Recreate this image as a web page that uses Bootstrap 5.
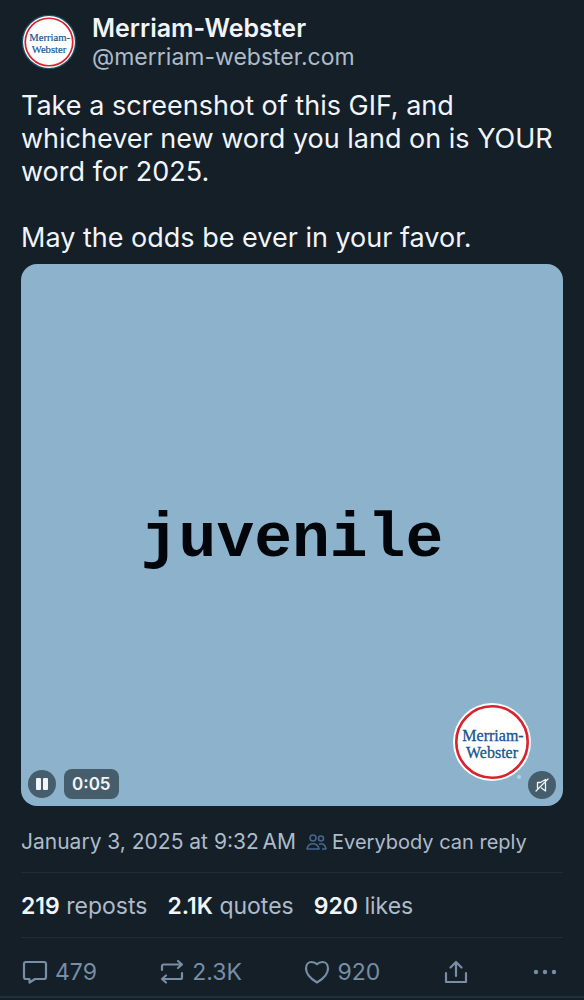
<!DOCTYPE html>
<html lang="en">
<head>
<meta charset="utf-8">
<meta name="viewport" content="width=device-width, initial-scale=1">
<title>Merriam-Webster post</title>
<link href="https://cdn.jsdelivr.net/npm/bootstrap@5.3.0/dist/css/bootstrap.min.css" rel="stylesheet">
<style>
body{background:#141f28;color:#f1f4f9;font-family:Inter,"Liberation Sans",sans-serif}
a{text-decoration:none;color:inherit}
.post{padding:13px 21px 0;border-bottom:2px solid #202f39}
.author{gap:15px}
.avatar{width:56px;height:56px}
.author-name{font-size:25px;line-height:30px;font-weight:600}
.author-handle{font-size:23px;line-height:28px;color:#aebbc9}
.post-text{font-size:27px;line-height:33px;padding:18px 0 10px}
.media{aspect-ratio:1;background:#8cb3cb;border-radius:16px;padding-top:10px}
.word{font:bold 63px/72px "Liberation Mono",monospace;color:#02060b}
.seal{width:80px;height:80px;right:31px;bottom:24px}
.chip,.chip:hover{background:#465e6b;color:#f1f4f9}
.round{width:28px;height:28px}
.controls{left:7px;bottom:7px}
.mute{right:7px;bottom:7px}
.time{font-size:17px;line-height:30px;font-weight:600;border-radius:8px;padding:0 8px}
.meta{font-size:21px;line-height:28px;color:#aebbc9;padding:22px 0 16px}
.audience{font-size:20px;line-height:28px;color:#aebbc9}
.stats{font-size:23px;line-height:28px;color:#aebbc9;gap:20px;padding:19px 0 17px}
.rule{border-top:1px solid #202d38}
.stats b{font-weight:600;color:#f1f4f9}
.actions{padding:20px 0 10px}
.act{font-size:23px;line-height:28px;color:#788ea5;gap:6px}
svg{display:block;flex:none}
</style>
</head>
<body>
<svg width="0" height="0" class="position-absolute" aria-hidden="true">
<symbol id="seal" viewBox="0 0 80 80" overflow="visible">
<circle cx="40" cy="40" r="39" fill="#fff"/>
<circle cx="40" cy="40" r="35.7" fill="#fff" stroke="#d8232f" stroke-width="2.6"/>
<g fill="#15548f" stroke="#15548f" stroke-width=".3" font-family="Liberation Serif,serif" font-size="16" text-anchor="middle"><text x="41" y="39">Merriam-</text><text x="40" y="56">Webster</text></g>
</symbol>
</svg>
<main class="post">
<header class="author d-flex align-items-center">
<a href="#" aria-label="Merriam-Webster profile"><svg class="avatar" viewBox="0 0 80 80"><circle cx="40" cy="40" r="39" fill="#1c5268"/><use href="#seal" x="2" y="2" width="76" height="76"/></svg></a>
<div class="d-flex flex-column"><a href="#" class="author-name">Merriam-Webster</a><a href="#" class="author-handle">@merriam-webster.com</a></div>
</header>
<p class="post-text mb-0">Take a screenshot of this GIF, and whichever new word you land on is YOUR word for 2025.<br><br>May the odds be ever in your favor.</p>
<section class="media position-relative d-flex align-items-center justify-content-center">
<span class="word">juvenile</span>
<svg class="seal position-absolute" role="img" aria-label="Merriam-Webster logo"><use href="#seal"/><circle cx="67" cy="75" r="2" fill="#b5d3e5"/></svg>
<div class="controls position-absolute d-flex align-items-center gap-2">
<button type="button" class="btn border-0 chip round rounded-circle p-0 d-flex align-items-center justify-content-center" aria-label="Pause"><svg width="14" height="14" fill="currentColor"><rect x="1" y="1" width="5" height="12" rx="1"/><rect x="8" y="1" width="5" height="12" rx="1"/></svg></button>
<span class="chip time">0:05</span>
</div>
<button type="button" class="mute position-absolute btn border-0 chip round rounded-circle p-0 d-flex align-items-center justify-content-center" aria-label="Unmute"><svg width="16" height="16" viewBox="0 0 16 16" fill="none" stroke="currentColor" stroke-width="1.3" stroke-linejoin="round" stroke-linecap="round"><path d="M2 14 14 2M3.500 11V5.500H6.500L11.500 2.500V4.500M11.500 6v8L7.500 11"/></svg></button>
</section>
<div class="meta d-flex align-items-center">
<time datetime="2025-01-03T09:32">January 3, 2025 at 9:32&#8239;AM</time>
<button type="button" class="audience btn border-0 p-0 d-flex align-items-center"><svg class="ms-2 me-1" width="24" height="20" viewBox="0 0 24 20" fill="none" stroke="#45678a" stroke-width="1.6" stroke-linejoin="round"><circle cx="9" cy="6" r="3"/><circle cx="17" cy="6.500" r="2.500"/><path d="M3 17c.7-3.600 3-5.200 6-5.200s5.300 1.600 6 5.200zM15 12.200c3.500-1.200 6.300.5 7 4.800h-4"/></svg>Everybody can reply</button>
</div>
<div class="stats rule d-flex">
<a href="#"><b>219</b> reposts</a><a href="#"><b>2.1K</b> quotes</a><a href="#"><b>920</b> likes</a>
</div>
<div class="actions rule d-flex justify-content-between">
<button type="button" class="act btn border-0 p-0 d-flex align-items-center" aria-label="Reply, 479"><svg width="28" height="28" viewBox="0 0 28 28" fill="none" stroke="currentColor" stroke-width="2.2" stroke-linejoin="round"><path d="M5 4h18a2 2 0 0 1 2 2v13a2 2 0 0 1-2 2H14l-5.500 3.500V21H5a2 2 0 0 1-2-2V6a2 2 0 0 1 2-2z"/></svg>479</button>
<button type="button" class="act btn border-0 p-0 d-flex align-items-center" aria-label="Repost, 2.3K"><svg width="28" height="28" viewBox="0 0 28 28" fill="none" stroke="currentColor" stroke-width="2.2" stroke-linejoin="round" stroke-linecap="round"><path d="M4 12V8a1.500 1.500 0 0 1 1.500-1.500H24M20 3l4 3.500L20 10M24 15v4.500a1.500 1.500 0 0 1-1.500 1.500H4M8 17.500 4 21l4 3.500"/></svg>2.3K</button>
<button type="button" class="act btn border-0 p-0 d-flex align-items-center" aria-label="Like, 920"><svg width="28" height="28" viewBox="0 0 28 28" fill="none" stroke="currentColor" stroke-width="2.2" stroke-linejoin="round"><path d="M14 24.500C5.500 19.500 3 15.500 3 10.500 3 6.500 5.500 4 8.500 4c2.300 0 4.300.9 5.500 2.200C15.200 4.900 17.200 4 19.500 4c3 0 5.500 2.500 5.500 6.500 0 5-2.500 9-11 14z"/></svg>920</button>
<button type="button" class="act btn border-0 p-0 d-flex align-items-center" aria-label="Share"><svg width="28" height="28" viewBox="0 0 28 28" fill="none" stroke="currentColor" stroke-width="2.2" stroke-linejoin="round" stroke-linecap="round"><path d="M4 15v9h20v-9M14 18V4M8.500 9.500 14 4l5.500 5.500"/></svg></button>
<button type="button" class="act btn border-0 p-0 d-flex align-items-center me-1" aria-label="More options"><svg width="28" height="28" viewBox="0 0 28 28" fill="currentColor"><circle cx="5" cy="14" r="2.200"/><circle cx="14" cy="14" r="2.200"/><circle cx="23" cy="14" r="2.200"/></svg></button>
</div>
</main>
<script src="https://cdn.jsdelivr.net/npm/bootstrap@5.3.0/dist/js/bootstrap.bundle.min.js"></script>
</body>
</html>
